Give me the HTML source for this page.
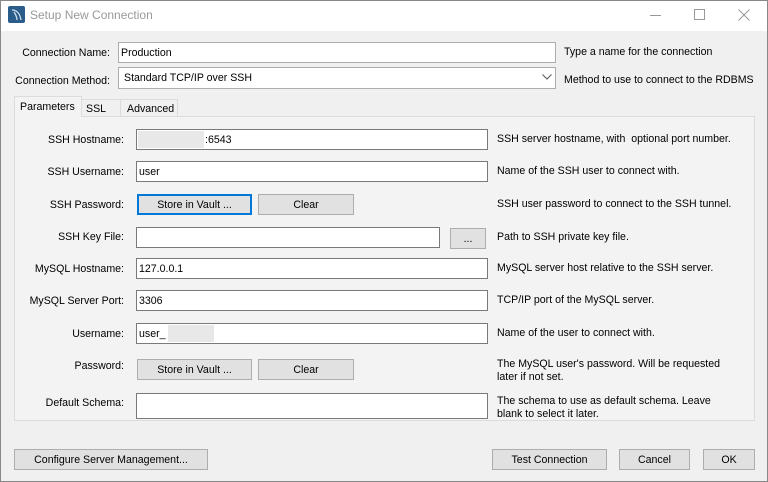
<!DOCTYPE html>
<html><head><style>
*{margin:0;padding:0;box-sizing:border-box}
body{width:768px;height:482px;background:#f0f0f0;font-family:"Liberation Sans",sans-serif;font-size:10.6px;color:#000;position:relative;overflow:hidden}
.a{position:absolute;white-space:nowrap}
.lbl{position:absolute;text-align:right;white-space:nowrap;line-height:14px}
.in{position:absolute;background:#fff;border:1px solid #7a7a7a;height:21px;padding-left:2px;line-height:21px}
.btn{position:absolute;background:#e1e1e1;border:1px solid #adadad;height:21px;text-align:center;line-height:20px}
.d{position:absolute;left:497px;line-height:13px;white-space:nowrap}
</style></head><body>
<div class="a" style="left:0;top:0;width:768px;height:31px;background:#fff"></div>
<div class="a" style="left:0;top:0;width:1px;height:482px;background:#888"></div>
<div class="a" style="left:767px;top:0;width:1px;height:482px;background:#888"></div>
<div class="a" style="left:0;top:481px;width:768px;height:1px;background:#888"></div>
<div class="a" style="left:0;top:0;width:768px;height:1px;background:#888"></div>
<svg class="a" style="left:8px;top:6px" width="17" height="17" viewBox="0 0 17 17"><rect width="17" height="17" rx="2" fill="#2b5d8a"/><path d="M4 4 C9 4 12 8 13 14 M6 6 C8 9 9 11 9 14" stroke="#cfe0ee" stroke-width="1.3" fill="none"/></svg>
<div class="a" style="left:30px;top:8px;font-size:12px;color:#999">Setup New Connection</div>
<div class="a" style="left:650px;top:15px;width:11px;height:1px;background:#999"></div>
<div class="a" style="left:694px;top:9px;width:11px;height:11px;border:1px solid #999"></div>
<svg class="a" style="left:738px;top:9px" width="12" height="12"><path d="M0.5 0.5L11.5 11.5M11.5 0.5L0.5 11.5" stroke="#999" stroke-width="1"/></svg>

<div class="lbl" style="right:658px;top:46px">Connection Name:</div>
<div class="in" style="left:118px;top:42px;width:438px;border-color:#adadad">Production</div>
<div class="a" style="left:564px;top:46px">Type a name for the connection</div>
<div class="lbl" style="right:658px;top:74px">Connection Method:</div>
<div class="in" style="left:118px;top:67px;width:438px;height:22px;border-color:#adadad;padding-left:5px">Standard TCP/IP over SSH</div>
<svg class="a" style="left:542px;top:74px" width="10" height="6"><path d="M0.5 0.5L5 5L9.5 0.5" stroke="#555" fill="none"/></svg>
<div class="a" style="left:564px;top:74px">Method to use to connect to the RDBMS</div>

<div class="a" style="left:14px;top:116px;width:741px;height:305px;border:1px solid #dcdcdc;background:#f3f3f3"></div>
<div class="a" style="left:14px;top:96px;width:68px;height:21px;background:#f3f3f3;border:1px solid #dcdcdc;border-bottom:none;padding:4px 0 0 5px">Parameters</div>
<div class="a" style="left:81px;top:99px;width:40px;height:18px;border:1px solid #dcdcdc;border-bottom:none;padding:3px 0 0 4px">SSL</div>
<div class="a" style="left:120px;top:99px;width:58px;height:18px;border:1px solid #dcdcdc;border-bottom:none;padding:3px 0 0 6px">Advanced</div>

<div class="lbl" style="right:644px;top:133px">SSH Hostname:</div>
<div class="in" style="left:136px;top:129px;width:352px;padding-left:68px"><span class="a" style="left:1px;top:1px;width:66px;height:17px;background:#e8e8e8"></span>:6543</div>
<div class="d" style="top:133px">SSH server hostname, with &nbsp;optional port number.</div>

<div class="lbl" style="right:644px;top:165px">SSH Username:</div>
<div class="in" style="left:136px;top:161px;width:352px">user</div>
<div class="d" style="top:165px">Name of the SSH user to connect with.</div>

<div class="lbl" style="right:644px;top:198px">SSH Password:</div>
<div class="btn" style="left:137px;top:194px;width:115px;border:2px solid #0078d7;line-height:18px">Store in Vault ...</div>
<div class="btn" style="left:258px;top:194px;width:96px">Clear</div>
<div class="d" style="top:198px">SSH user password to connect to the SSH tunnel.</div>

<div class="lbl" style="right:644px;top:230px">SSH Key File:</div>
<div class="in" style="left:136px;top:227px;width:304px"></div>
<div class="btn" style="left:450px;top:228px;width:36px">...</div>
<div class="d" style="top:231px">Path to SSH private key file.</div>

<div class="lbl" style="right:644px;top:262px">MySQL Hostname:</div>
<div class="in" style="left:136px;top:258px;width:352px">127.0.0.1</div>
<div class="d" style="top:262px">MySQL server host relative to the SSH server.</div>

<div class="lbl" style="right:644px;top:294px">MySQL Server Port:</div>
<div class="in" style="left:136px;top:290px;width:352px">3306</div>
<div class="d" style="top:294px">TCP/IP port of the MySQL server.</div>

<div class="lbl" style="right:644px;top:327px">Username:</div>
<div class="in" style="left:136px;top:323px;width:352px">user_<span class="a" style="left:31px;top:1px;width:46px;height:17px;background:#e8e8e8"></span></div>
<div class="d" style="top:327px">Name of the user to connect with.</div>

<div class="lbl" style="right:644px;top:359px">Password:</div>
<div class="btn" style="left:137px;top:359px;width:115px">Store in Vault ...</div>
<div class="btn" style="left:258px;top:359px;width:96px">Clear</div>
<div class="d" style="top:358px">The MySQL user's password. Will be requested<br>later if not set.</div>

<div class="lbl" style="right:644px;top:396px">Default Schema:</div>
<div class="in" style="left:136px;top:393px;width:352px;height:26px"></div>
<div class="d" style="top:395px">The schema to use as default schema. Leave<br>blank to select it later.</div>

<div class="btn" style="left:14px;top:449px;width:194px">Configure Server Management...</div>
<div class="btn" style="left:492px;top:449px;width:115px">Test Connection</div>
<div class="btn" style="left:619px;top:449px;width:71px">Cancel</div>
<div class="btn" style="left:703px;top:449px;width:52px">OK</div>
</body></html>
